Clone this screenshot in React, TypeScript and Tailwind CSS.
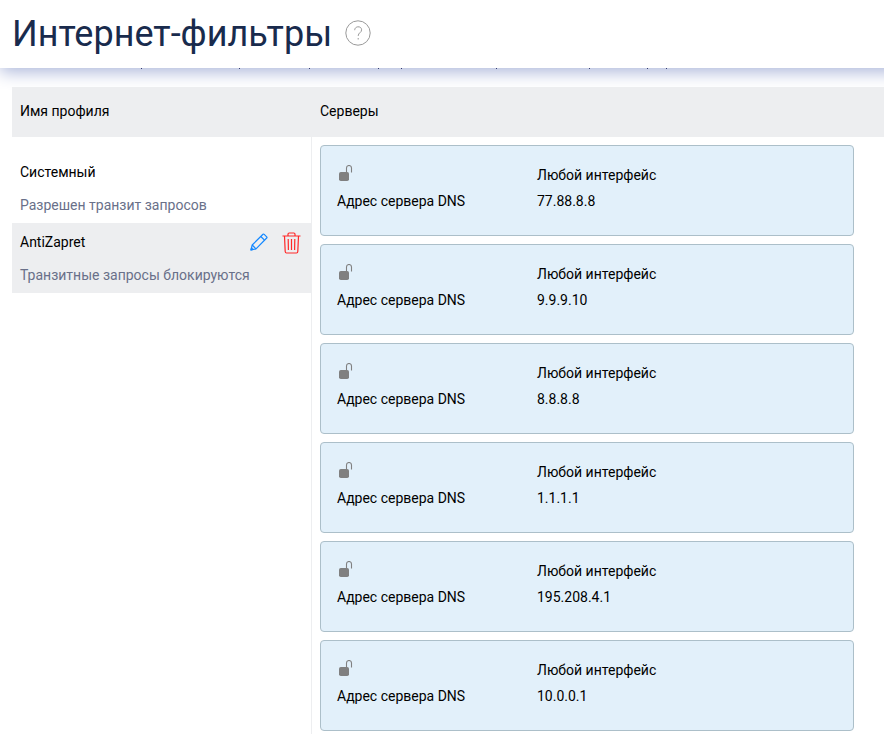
const servers = ['77.88.8.8', '9.9.9.10', '8.8.8.8', '1.1.1.1', '195.208.4.1', '10.0.0.1'];

function OpenLock() {
  return (
    <svg width="15" height="17" viewBox="0 0 15 17" className="block">
      <rect x="1" y="7" width="10" height="9" rx="1.8" fill="#808080" />
      <path d="M8.5 7V3a2.5 2.5 0 0 1 5 0V7.5" fill="none" stroke="#808080" strokeWidth="1.1" />
    </svg>
  );
}

function Pencil() {
  return (
    <svg className="mb-0.5" width="18" height="18" viewBox="0 0 18 18" fill="none" stroke="#1488ff" strokeWidth="1.2" strokeLinejoin="round">
      <path d="M1 17l1.2-5L13 1.3q.6-.6 1.2 0l2.5 2.5q.6.6 0 1.2L6 15.8z" />
      <path d="M2.2 12L6 15.8M10.8 3.5l3.7 3.7M1 17l2-.5-1.5-1.5z" />
    </svg>
  );
}

function Trash() {
  return (
    <svg width="19" height="22" viewBox="0 0 19 22" fill="none" stroke="#ff2828" strokeWidth="1.2">
      <path d="M.5 4h18M6 3.8V2.2Q6 1 7.2 1h4.6Q13 1 13 2.2v1.6M2.5 4l.7 15.5q.1 1.5 1.3 1.5h10q1.2 0 1.3-1.5L16.5 4M6.2 7l.2 11M9.5 7v11M12.8 7l-.2 11" />
    </svg>
  );
}

function Profile({ name, note, selected }: { name: string; note: string; selected?: boolean }) {
  return (
    <div className={`h-[70px] px-2 pt-[7px] ${selected ? 'bg-[#edeef0]' : ''}`}>
      <div className="flex h-6 items-center justify-between text-black">
        <span>{name}</span>
        {selected && (
          <span className="flex items-center gap-[14px] pr-0.5 pt-0.5">
            <Pencil />
            <Trash />
          </span>
        )}
      </div>
      <div className="mt-[9px] leading-6 text-[#697089]">{note}</div>
    </div>
  );
}

export default function App() {
  return (
    <div className="h-[734px] w-[884px] overflow-hidden bg-white font-['Roboto','Liberation_Sans',sans-serif] text-sm text-black">
      <header className="relative flex h-[68px] w-[904px] items-start bg-white pl-3 shadow-[0_4px_16px_#abb6da]">
        <h1 className="mt-[10px] w-[333px] whitespace-nowrap text-[36px] leading-[48px] text-[#192b4d]">Интернет-фильтры</h1>
        <svg className="mt-5" width="26" height="26" viewBox="0 0 26 26" fill="none" stroke="#999" strokeWidth="1">
          <circle cx="13" cy="13" r="12.2" />
          <path d="M9.7 10.2c0-4.5 6.9-4.5 6.9-.4 0 3-3.4 2.8-3.4 6.1M13.2 18v1.5" />
        </svg>
        <svg className="absolute left-0 top-[68px]" width="884" height="1" fill="#353b70">
          {[141, 239, 309, 378, 401, 496, 589, 647, 666].map((x) => (
            <rect key={x} x={x} width="1" height="1" />
          ))}
        </svg>
      </header>
      <main className="ml-3 mt-[19px]">
        <div className="relative flex h-[50px] items-center bg-[#edeef0] pb-0.5">
          <div className="w-[300px] pl-2">Имя профиля</div>
          <div className="pl-2">Серверы</div>
        </div>
        <div className="flex">
          <aside className="h-[597px] w-[300px] border-r border-[#edeef0] pt-4">
            <Profile name="Системный" note="Разрешен транзит запросов" />
            <Profile name="AntiZapret" note="Транзитные запросы блокируются" selected />
          </aside>
          <section className="flex flex-col gap-2 pl-2 pt-2">
            {servers.map((address) => (
              <article key={address} className="flex h-[91px] w-[534px] rounded border border-[#acbfc9] bg-[#e2f0fa] px-4">
                <div className="w-[200px]">
                  <div className="h-[42px] pl-px pt-[19px]"><OpenLock /></div>
                  <div className="leading-[26px]">Адрес сервера DNS</div>
                </div>
                <div className="pt-4 leading-[26px]">
                  <div>Любой интерфейс</div>
                  <div>{address}</div>
                </div>
              </article>
            ))}
          </section>
        </div>
      </main>
    </div>
  );
}
